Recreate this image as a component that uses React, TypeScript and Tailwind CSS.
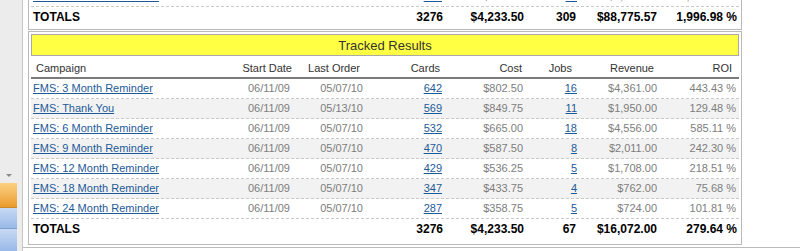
import React from "react";

type Row = {
  campaign: string;
  start: string;
  last: string;
  cards: string;
  cost: string;
  jobs: string;
  revenue: string;
  roi: string;
};

const trackedRows: Row[] = [
  { campaign: "FMS: 3 Month Reminder", start: "06/11/09", last: "05/07/10", cards: "642", cost: "$802.50", jobs: "16", revenue: "$4,361.00", roi: "443.43 %" },
  { campaign: "FMS: Thank You", start: "06/11/09", last: "05/13/10", cards: "569", cost: "$849.75", jobs: "11", revenue: "$1,950.00", roi: "129.48 %" },
  { campaign: "FMS: 6 Month Reminder", start: "06/11/09", last: "05/07/10", cards: "532", cost: "$665.00", jobs: "18", revenue: "$4,556.00", roi: "585.11 %" },
  { campaign: "FMS: 9 Month Reminder", start: "06/11/09", last: "05/07/10", cards: "470", cost: "$587.50", jobs: "8", revenue: "$2,011.00", roi: "242.30 %" },
  { campaign: "FMS: 12 Month Reminder", start: "06/11/09", last: "05/07/10", cards: "429", cost: "$536.25", jobs: "5", revenue: "$1,708.00", roi: "218.51 %" },
  { campaign: "FMS: 18 Month Reminder", start: "06/11/09", last: "05/07/10", cards: "347", cost: "$433.75", jobs: "4", revenue: "$762.00", roi: "75.68 %" },
  { campaign: "FMS: 24 Month Reminder", start: "06/11/09", last: "05/07/10", cards: "287", cost: "$358.75", jobs: "5", revenue: "$724.00", roi: "101.81 %" },
];

// row of the table above, only its bottom edge shows
const clippedRow: Row = {
  campaign: "FMS: 24 Month Reminder",
  start: "06/11/09",
  last: "05/07/10",
  cards: "287",
  cost: "$358.75",
  jobs: "11",
  revenue: "$4,738.00",
  roi: "1,220.69 %",
};

const grid = "grid grid-cols-[208px_54px_73px_79px_81px_53px_81px_79px]";
const link = "text-[#1d5a98] underline";
const val = "flex items-center justify-end pr-[3px] text-[#7d7d7d]";

const DataRow = ({ row, shaded }: { row: Row; shaded?: boolean }) => (
  <div className={`${grid} h-[20px] border-b border-dashed border-[#c9c9c9] ${shaded ? "bg-[#f2f2f2]" : "bg-white"}`}>
    <div className="flex items-center pl-[2px]">
      <a className={link}>{row.campaign}</a>
    </div>
    <div className={val}>{row.start}</div>
    <div className={val}>{row.last}</div>
    <div className="flex items-center justify-end pr-[3px]">
      <a className={link}>{row.cards}</a>
    </div>
    <div className={val}>{row.cost}</div>
    <div className="flex items-center justify-end pr-[2px]">
      <a className={link}>{row.jobs}</a>
    </div>
    <div className={val}>{row.revenue}</div>
    <div className={`${val} pr-[2px]`}>{row.roi}</div>
  </div>
);

const TotalsRow = ({ t }: { t: string[] }) => (
  <div className={`${grid} h-[20px] text-[12px] font-bold text-black`}>
    <div className="flex items-center pl-[2px]">TOTALS</div>
    <div />
    <div />
    <div className="flex items-center justify-end pr-[2px]">{t[0]}</div>
    <div className="flex items-center justify-end pr-[2px]">{t[1]}</div>
    <div className="flex items-center justify-end pr-[3px]">{t[2]}</div>
    <div className="flex items-center justify-end pr-[3px]">{t[3]}</div>
    <div className="flex items-center justify-end pr-[2px]">{t[4]}</div>
  </div>
);

const SideStrip = () => (
  <div className="flex h-full w-[23px] shrink-0 flex-col border-r border-[#c6c6c6] bg-[#ececec]">
    <div className="flex-1" />
    <div className="flex h-[16px] w-[17px] items-center justify-center">
      <div className="h-0 w-0 border-x-[3px] border-t-[3px] border-x-transparent border-t-[#8a8a8a]" />
    </div>
    <div className="h-[25px] w-[17px] border-b border-[#c98a2a] bg-gradient-to-b from-[#fbd080] to-[#eb9c28]" />
    <div className="h-[21px] w-[17px] border-b border-[#7f9fd2] bg-gradient-to-b from-[#c8d9f4] to-[#99b9e8]" />
    <div className="h-[22px] w-[17px] bg-gradient-to-b from-[#c8d9f4] to-[#99b9e8]" />
  </div>
);

export default function App() {
  return (
    <div className="flex h-[251px] w-[800px] overflow-hidden bg-white font-['Liberation_Sans',Arial,sans-serif] text-[11px] leading-[13px]">
      <SideStrip />
      <div className="flex h-[248px] flex-1 flex-col border-b border-[#bcbcbc] pl-[5px]">
        {/* previous report, cut off at top */}
        <div className="mt-[-13px] w-[714px] border-x border-b border-[#b9b9b9] px-[2px] pb-[2px]">
          <DataRow row={clippedRow} />
          <TotalsRow t={["3276", "$4,233.50", "309", "$88,775.57", "1,996.98 %"]} />
        </div>

        {/* tracked results */}
        <div className="mt-[1px] w-[714px] border border-[#b9b9b9] px-[2px] pt-[2px] pb-[5px]">
          <div className="flex h-[22px] items-center justify-center border border-[#a9a9a9] bg-[#ffff44] text-[13px] text-[#333]">
            Tracked Results
          </div>
          <div className={`${grid} h-[23px] border-b-2 border-[#7a7a7a] text-[#333]`}>
            <div className="flex items-end pb-[2px] pl-[5px]">Campaign</div>
            <div className="flex items-end justify-end pb-[2px] pr-[1px]">Start Date</div>
            <div className="flex items-end justify-end pb-[2px] pr-[6px]">Last Order</div>
            <div className="flex items-end justify-end pb-[2px] pr-[5px]">Cards</div>
            <div className="flex items-end justify-end pb-[2px] pr-[4px]">Cost</div>
            <div className="flex items-end justify-end pb-[2px] pr-[7px]">Jobs</div>
            <div className="flex items-end justify-end pb-[2px] pr-[6px]">Revenue</div>
            <div className="flex items-end justify-end pb-[2px] pr-[7px]">ROI</div>
          </div>
          {trackedRows.map((r, i) => (
            <DataRow key={r.campaign} row={r} shaded={i % 2 === 1} />
          ))}
          <TotalsRow t={["3276", "$4,233.50", "67", "$16,072.00", "279.64 %"]} />
        </div>
      </div>
    </div>
  );
}
